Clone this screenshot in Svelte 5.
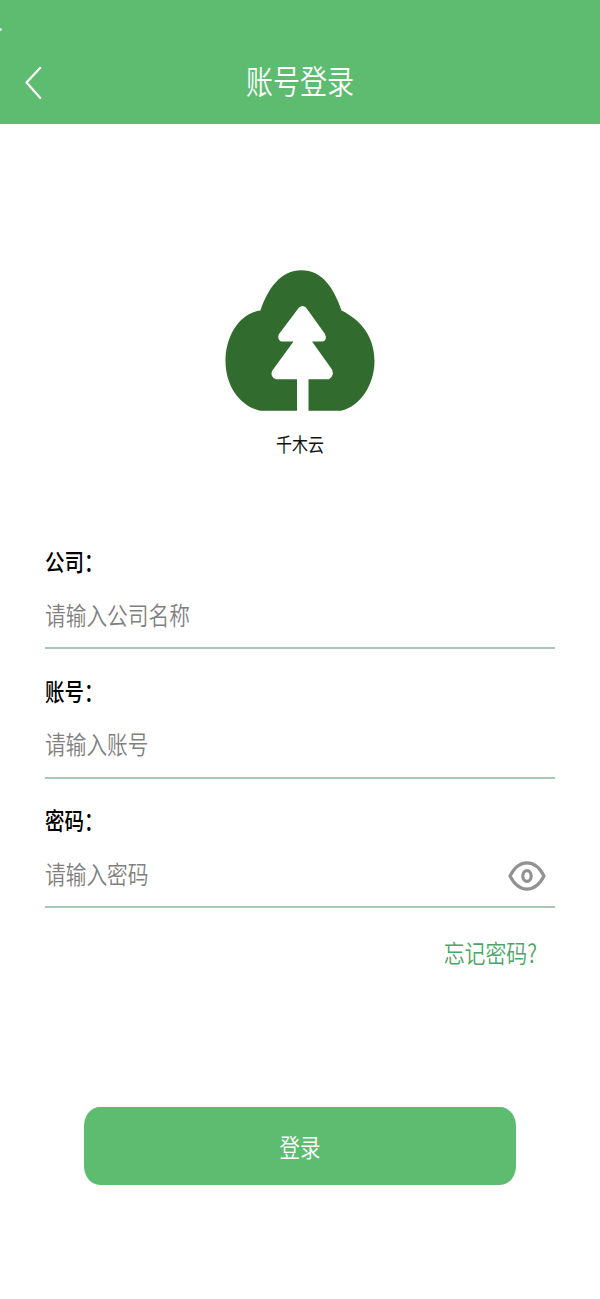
<script lang="ts">
  let company = $state('');
  let account = $state('');
  let password = $state('');
  let showPassword = $state(false);

  function handleSubmit(e: Event) {
    e.preventDefault();
  }
</script>

<div class="page">
  <header class="navbar">
    <span class="status-dot"></span>
    <button type="button" class="back" aria-label="返回">
      <svg width="18" height="36" viewBox="0 0 18 36" fill="none">
        <path d="M15.300 2.800 L1.500 17.500 L15.300 33" stroke="#fff" stroke-width="2.200" stroke-linecap="round" stroke-linejoin="round" />
      </svg>
    </button>
    <h1 class="title">账号登录</h1>
  </header>

  <div class="brand">
    <svg class="logo" width="150" height="141" viewBox="0 0 150 141">
      <path
        fill="#316c2e"
        d="M35.500 40.500 C43 18 56 .3 76.500 .3 C97 .3 109 18 116.500 40.500 C136 50 149.500 67 149.500 91 C149.500 114 136 136 116 140.800 H35 C15 136 .5 116 .5 91 C.5 65 15 43 35.500 40.500 Z"
      />
      <path
        fill="#fff"
        d="M74 37.500 Q77.500 34.500 81 37.500 L100 64 Q102.500 70 98 71.500 H87 L107 99.500 Q109.500 106 104 109.300 H83.500 V141 H72 V109.300 H51 Q45 107 47 101 L68.500 71.500 H56 Q51.500 69 54 64 Z"
      />
    </svg>
    <p class="brand-name">千木云</p>
  </div>

  <form class="login-form" onsubmit={handleSubmit}>
    <div class="field">
      <label for="company">公司：</label>
      <div class="control">
        <input id="company" type="text" placeholder="请输入公司名称" bind:value={company}>
      </div>
    </div>
    <div class="field">
      <label for="account">账号：</label>
      <div class="control">
        <input id="account" type="text" placeholder="请输入账号" bind:value={account}>
      </div>
    </div>
    <div class="field">
      <label for="password">密码：</label>
      <div class="control">
        <input id="password" type={showPassword ? 'text' : 'password'} placeholder="请输入密码" bind:value={password}>
        <button type="button" class="eye" aria-label="显示密码" onclick={() => (showPassword = !showPassword)}>
          <svg width="38" height="30" viewBox="0 0 38 30" fill="none" stroke="#929292">
            <path d="M2 15 C11 -2.400 27 -2.400 36 15 C27 32.400 11 32.400 2 15 Z" stroke-width="3.200" stroke-linejoin="round" />
            <ellipse cx="19" cy="15" rx="4.200" ry="5.400" stroke-width="3.200" />
          </svg>
        </button>
      </div>
    </div>

    <a class="forgot" href="#forgot"><span>忘记密码?</span></a>
    <button type="submit" class="submit"><span>登录</span></button>
  </form>
</div>

<style>
  :global(body) {
    background: #fff;
  }

  .page {
    min-height: 1299px;
    font-family: "Noto Sans CJK SC", sans-serif;
    color: #111;
  }

  .navbar {
    position: relative;
    display: grid;
    grid-template-columns: 66px 1fr 66px;
    align-items: center;
    box-sizing: border-box;
    height: 124px;
    padding-top: 41px;
    background: #5dbc6f;
  }

  .status-dot {
    position: absolute;
    top: 28px;
    left: -2px;
    width: 4px;
    height: 3px;
    border-radius: 50%;
    background: #e6f5e9;
  }

  button {
    padding: 0;
    border: none;
    background: none;
    font-family: inherit;
    cursor: pointer;
  }

  .back {
    display: flex;
    padding-left: 25px;
  }

  /* glyphs are taller than they are wide throughout */
  .title,
  .brand-name,
  label,
  input,
  .forgot span,
  .submit span {
    transform: scaleY(1.2);
  }

  .title {
    margin: 0 0 4px;
    font-size: 27px;
    font-weight: 350;
    line-height: 40px;
    text-align: center;
    color: #fff;
  }

  .brand {
    display: flex;
    flex-direction: column;
    align-items: center;
    padding-top: 146px;
  }

  .logo {
    display: block;
  }

  .brand-name {
    margin: 21px 0 0;
    font-size: 16px;
    line-height: 24px;
  }

  .login-form {
    display: flex;
    flex-direction: column;
    padding: 90px 45px 0;
  }

  .field {
    box-sizing: border-box;
    height: 129.5px;
  }

  label {
    display: block;
    font-size: 19.500px;
    font-weight: 500;
    line-height: 30px;
    color: #000;
  }

  .control {
    display: flex;
    align-items: center;
    box-sizing: border-box;
    height: 67px;
    margin-top: 6px;
    padding-right: 9px;
    border-bottom: 2px solid #a9c8b8;
  }

  input {
    flex: 1;
    min-width: 0;
    height: 40px;
    margin-bottom: 2px;
    padding: 0;
    border: none;
    outline: none;
    background: transparent;
    font-family: inherit;
    font-size: 20.700px;
    font-weight: 350;
    color: #222;
  }

  input::placeholder {
    color: #808080;
    opacity: 1;
  }

  .eye {
    display: flex;
    margin-top: 4px;
  }

  .forgot {
    align-self: flex-end;
    margin: 2px 18px 0 0;
    font-size: 20.900px;
    font-weight: 350;
    line-height: 30px;
    color: #4ba568;
    text-decoration: none;
  }

  .forgot span,
  .submit span {
    display: block;
  }

  .submit {
    height: 78px;
    margin: 140px 39px 0;
    border-radius: 16px / 19px;
    background: #5dbc6f;
    font-size: 20.500px;
    font-weight: 350;
    color: #fff;
  }
</style>
